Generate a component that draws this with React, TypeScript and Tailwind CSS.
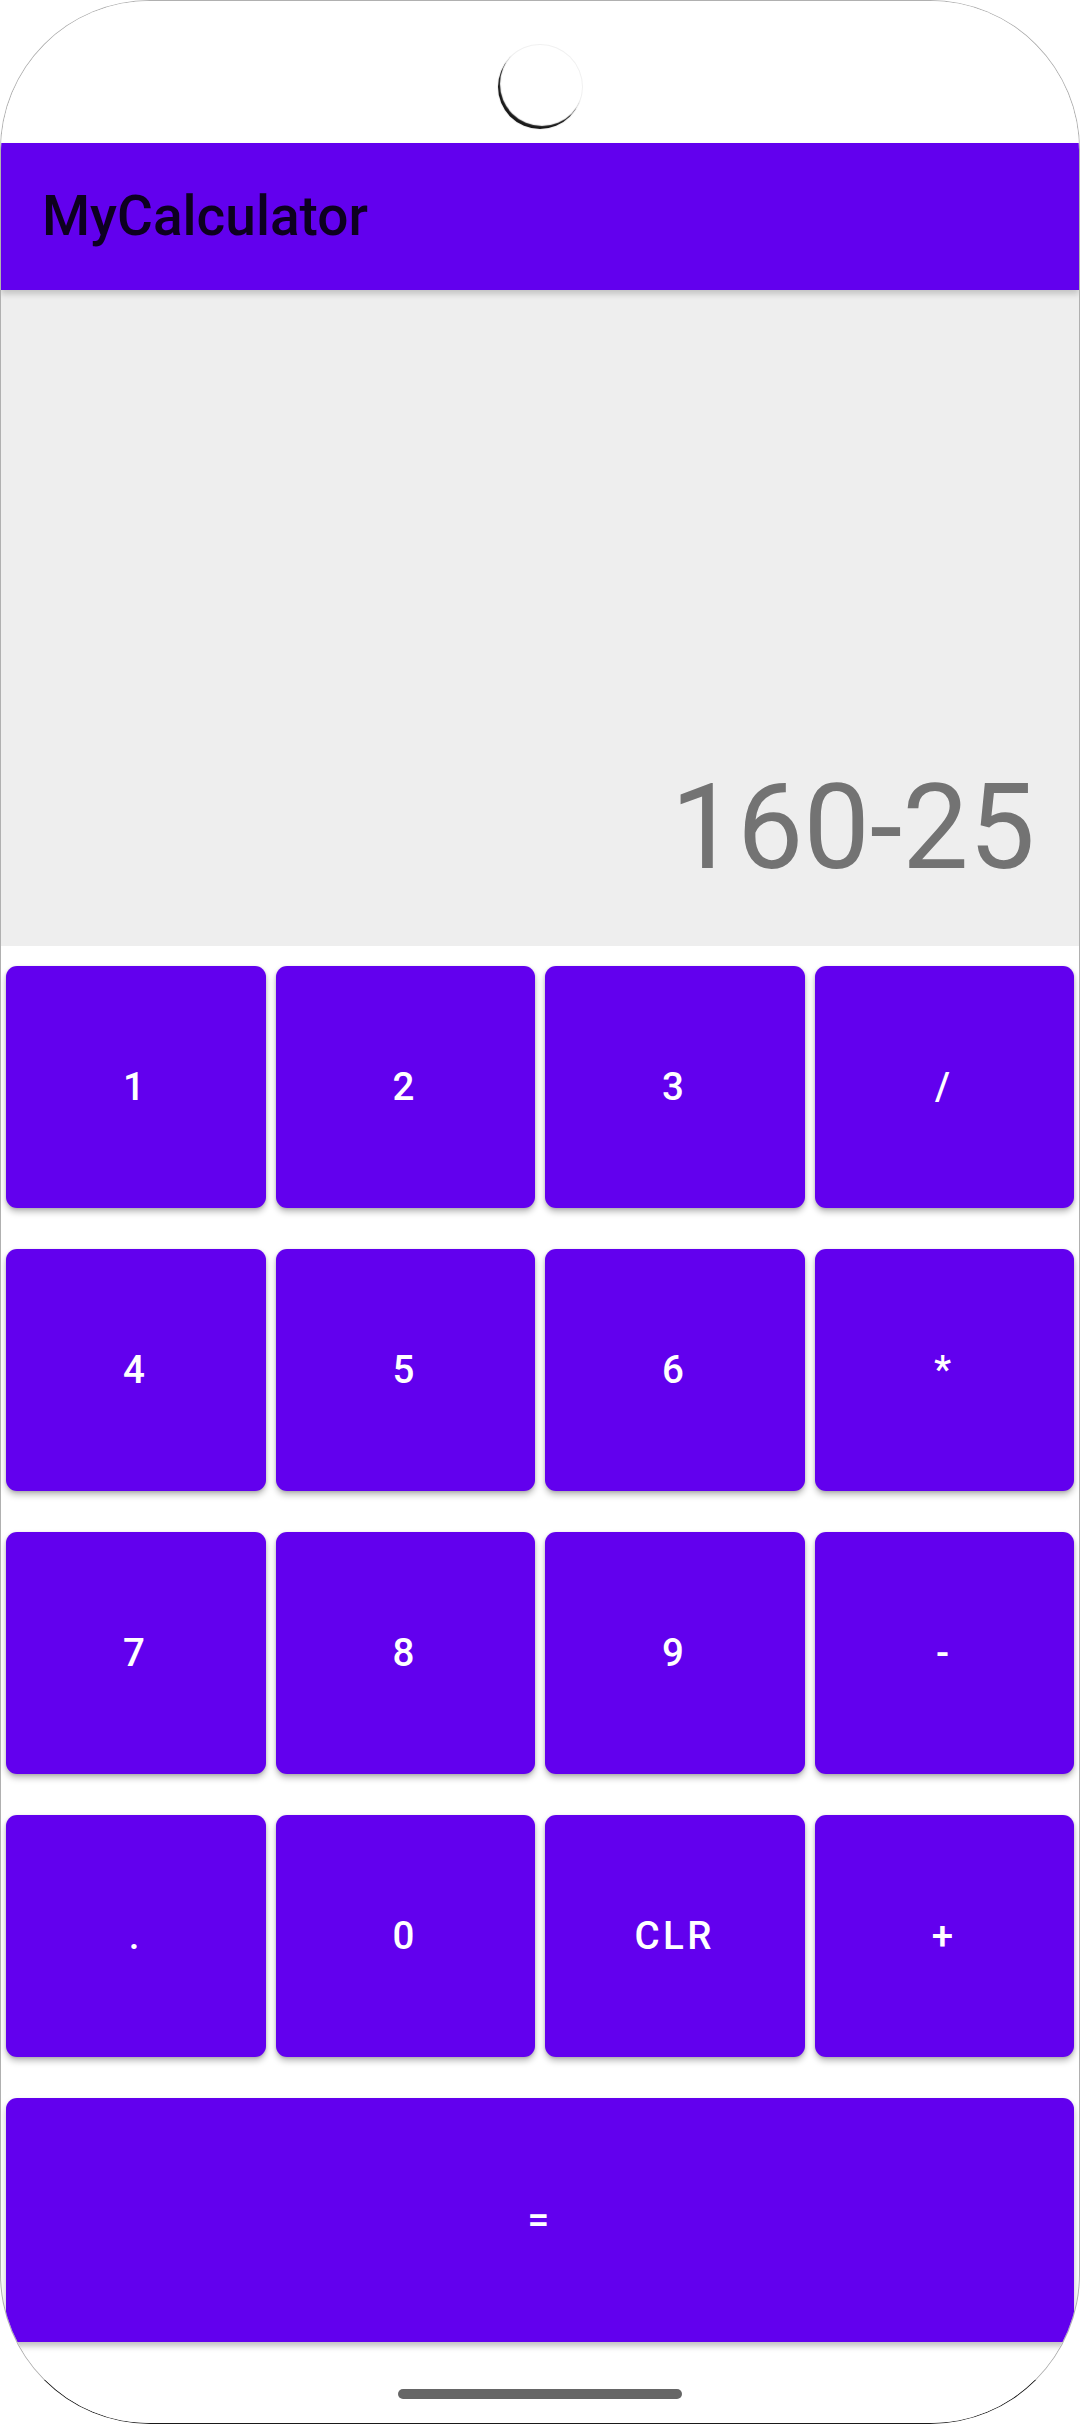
const keys = [
  ["1", "2", "3", "/"],
  ["4", "5", "6", "*"],
  ["7", "8", "9", "-"],
  [".", "0", "CLR", "+"],
];

const KeyButton = ({label}: {label: string}) => {
  return (
    <button className="flex h-[242px] items-center justify-center rounded-[11px] bg-[#6200ee] text-[38.5px] font-medium uppercase tracking-[0.0892em] text-white shadow-[0_4px_6px_rgba(0,0,0,0.26),0_1px_3px_rgba(0,0,0,0.14)]">
      {label}
    </button>
  );
};

const StatusBar = () => {
  return (
    <div className="flex h-[142px] justify-center bg-white">
      <div className="mt-[44px] h-[84px] w-[84px] rounded-full shadow-[inset_2px_-3px_1px_rgba(0,0,0,0.9),0_0_0_1px_rgba(0,0,0,0.06)]" />
    </div>
  );
};

const AppBar = () => {
  return (
    <div className="relative z-10 flex h-[147px] items-center bg-[#6200ee] pl-[41px] shadow-[0_4px_6px_rgba(0,0,0,0.18)]">
      <h1 className="text-[55px] font-medium leading-none text-[#0d001f]">MyCalculator</h1>
    </div>
  );
};

const Display = () => {
  return (
    <div className="flex h-[656px] items-end justify-end bg-[#eeeeee] pb-[59px] pr-[44px]">
      <span className="text-[118px] leading-none text-[#737373]">160-25</span>
    </div>
  );
};

const Keypad = () => {
  return (
    <div className="flex flex-col gap-[41px] px-[5px] pt-[20px]">
      {keys.map((row, i) => (
        <div key={i} className="grid grid-cols-4 gap-x-[10px]">
          {row.map((k) => (
            <KeyButton key={k} label={k} />
          ))}
        </div>
      ))}
      <button className="flex h-[244px] items-center justify-center rounded-t-[11px] bg-[#6200ee] text-[38.5px] font-medium tracking-[0.0892em] text-white shadow-[0_4px_6px_rgba(0,0,0,0.26)]">
        =
      </button>
    </div>
  );
};

const NavBar = () => {
  return (
    <div className="flex h-[83px] justify-center bg-white">
      <div className="mt-[47px] h-[10px] w-[284px] rounded-full bg-[#666666]" />
    </div>
  );
};

export default function App() {
  return (
    <div className="h-[2424px] w-[1080px] bg-white font-['Roboto',sans-serif]">
      <div className="h-full w-full overflow-hidden rounded-[150px] border border-[#b0b0b0] border-b-[#1a1a1a]">
        <StatusBar />
        <AppBar />
        <Display />
        <Keypad />
        <NavBar />
      </div>
    </div>
  );
}
